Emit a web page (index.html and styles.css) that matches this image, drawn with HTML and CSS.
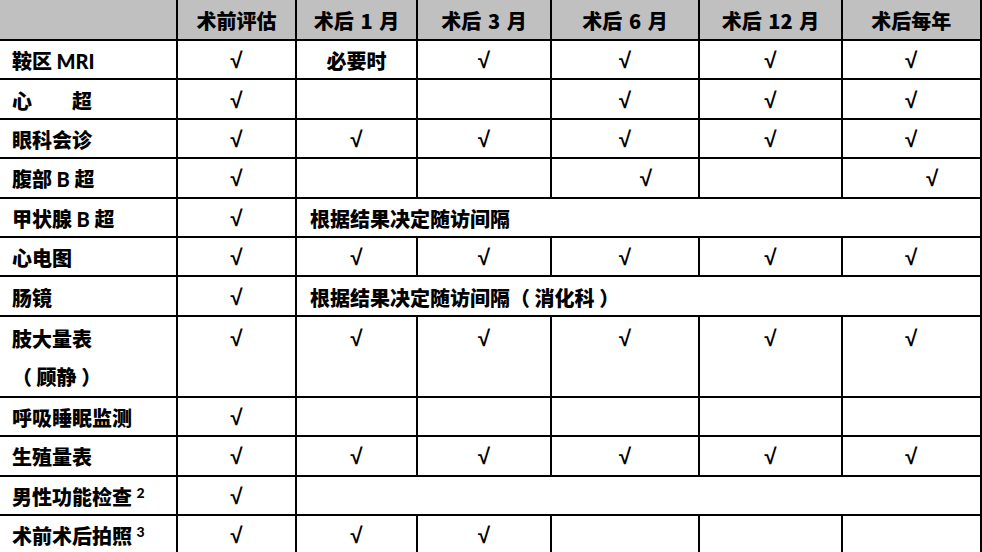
FILE: index.html
```html
<!DOCTYPE html>
<html lang="zh-CN">
<head>
<meta charset="utf-8">
<title>随访计划</title>
<link rel="stylesheet" href="styles.css">
</head>
<body>
<table class="plan">
  <colgroup>
    <col class="c-item">
    <col class="c-pre">
    <col class="c-m1">
    <col class="c-m3">
    <col class="c-m6">
    <col class="c-m12">
    <col class="c-yr">
  </colgroup>
  <thead>
    <tr class="head">
      <th class="first"></th>
      <th>术前评估</th>
      <th>术后 1 月</th>
      <th>术后 3 月</th>
      <th>术后 6 月</th>
      <th>术后 12 月</th>
      <th class="last">术后每年</th>
    </tr>
  </thead>
  <tbody>
    <tr>
      <td class="first item">鞍区 <span class="lat">MRI</span></td>
      <td class="ck">√</td>
      <td class="tx">必要时</td>
      <td class="ck">√</td>
      <td class="ck">√</td>
      <td class="ck">√</td>
      <td class="ck last">√</td>
    </tr>
    <tr>
      <td class="first item pre">心　　超</td>
      <td class="ck">√</td>
      <td></td>
      <td></td>
      <td class="ck">√</td>
      <td class="ck">√</td>
      <td class="ck last">√</td>
    </tr>
    <tr>
      <td class="first item">眼科会诊</td>
      <td class="ck">√</td>
      <td class="ck">√</td>
      <td class="ck">√</td>
      <td class="ck">√</td>
      <td class="ck">√</td>
      <td class="ck last">√</td>
    </tr>
    <tr>
      <td class="first item">腹部 <span class="lat">B</span> 超</td>
      <td class="ck">√</td>
      <td></td>
      <td></td>
      <td class="ck shift">√</td>
      <td></td>
      <td class="ck shift last">√</td>
    </tr>
    <tr>
      <td class="first item">甲状腺 <span class="lat">B</span> 超</td>
      <td class="ck">√</td>
      <td class="span last" colspan="5">根据结果决定随访间隔</td>
    </tr>
    <tr>
      <td class="first item">心电图</td>
      <td class="ck">√</td>
      <td class="ck">√</td>
      <td class="ck">√</td>
      <td class="ck">√</td>
      <td class="ck">√</td>
      <td class="ck last">√</td>
    </tr>
    <tr>
      <td class="first item">肠镜</td>
      <td class="ck">√</td>
      <td class="span last" colspan="5">根据结果决定随访间隔（ 消化科 ）</td>
    </tr>
    <tr class="tall">
      <td class="first item">肢大量表<br>（ 顾静 ）</td>
      <td class="ck">√</td>
      <td class="ck">√</td>
      <td class="ck">√</td>
      <td class="ck">√</td>
      <td class="ck">√</td>
      <td class="ck last">√</td>
    </tr>
    <tr>
      <td class="first item">呼吸睡眠监测</td>
      <td class="ck">√</td>
      <td></td>
      <td></td>
      <td></td>
      <td></td>
      <td class="last"></td>
    </tr>
    <tr>
      <td class="first item">生殖量表</td>
      <td class="ck">√</td>
      <td class="ck">√</td>
      <td class="ck">√</td>
      <td class="ck">√</td>
      <td class="ck">√</td>
      <td class="ck last">√</td>
    </tr>
    <tr>
      <td class="first item">男性功能检查 <sup class="note">2</sup></td>
      <td class="ck">√</td>
      <td class="last" colspan="5"></td>
    </tr>
    <tr>
      <td class="first item">术前术后拍照 <sup class="note">3</sup></td>
      <td class="ck">√</td>
      <td class="ck">√</td>
      <td class="ck">√</td>
      <td></td>
      <td></td>
      <td class="last"></td>
    </tr>
  </tbody>
</table>
</body>
</html>
```

FILE: styles.css
```css
html, body {
  margin: 0;
  padding: 0;
  background: #ffffff;
}

body {
  font-family: "Noto Sans CJK SC", "Noto Sans", sans-serif;
  font-weight: 900;
  color: #000000;
  font-size: 20px;
}

.plan {
  border-collapse: collapse;
  table-layout: fixed;
  width: 981px;
}

.c-item { width: 177px; }
.c-pre { width: 119px; }
.c-m1 { width: 121px; }
.c-m3 { width: 134px; }
.c-m6 { width: 148px; }
.c-m12 { width: 143px; }
.c-yr { width: 139px; }

.plan th,
.plan td {
  border: 2px solid #000000;
  padding: 0;
  height: 34.4px;
  line-height: 24px;
  vertical-align: middle;
  white-space: nowrap;
  overflow: hidden;
}

.plan .head th {
  border-top: none;
  background: #c0c0c0;
  height: 37px;
  text-align: center;
  font-weight: 900;
  padding-top: 2px;
  word-spacing: 2px;
}

.plan .first {
  border-left: none;
}

.plan .last {
  border-right: 3px solid #000000;
}

.item {
  text-align: left;
  padding-left: 12px !important;
  padding-top: 3px !important;
}

.pre {
  white-space: pre;
}

.lat {
  font-family: "Lato", "Liberation Sans", sans-serif;
  font-weight: 900;
}

.ck {
  text-align: center;
  font-family: "Liberation Sans", "DejaVu Sans", sans-serif;
  font-weight: 700;
  font-size: 22px;
  padding-top: 3px !important;
}

.ck.shift {
  padding-left: 42px !important;
}

.tx {
  text-align: center;
  padding-top: 3px !important;
}

.span {
  text-align: left;
  padding-left: 13px !important;
  padding-top: 3px !important;
}

.plan .tall td {
  height: 72.8px;
  vertical-align: top;
  line-height: 38px;
  padding-top: 3px !important;
}

.note {
  font-size: 14px;
  line-height: 0;
  vertical-align: 7px;
  font-family: "Lato", "Liberation Sans", sans-serif;
  font-weight: 900;
}
```
